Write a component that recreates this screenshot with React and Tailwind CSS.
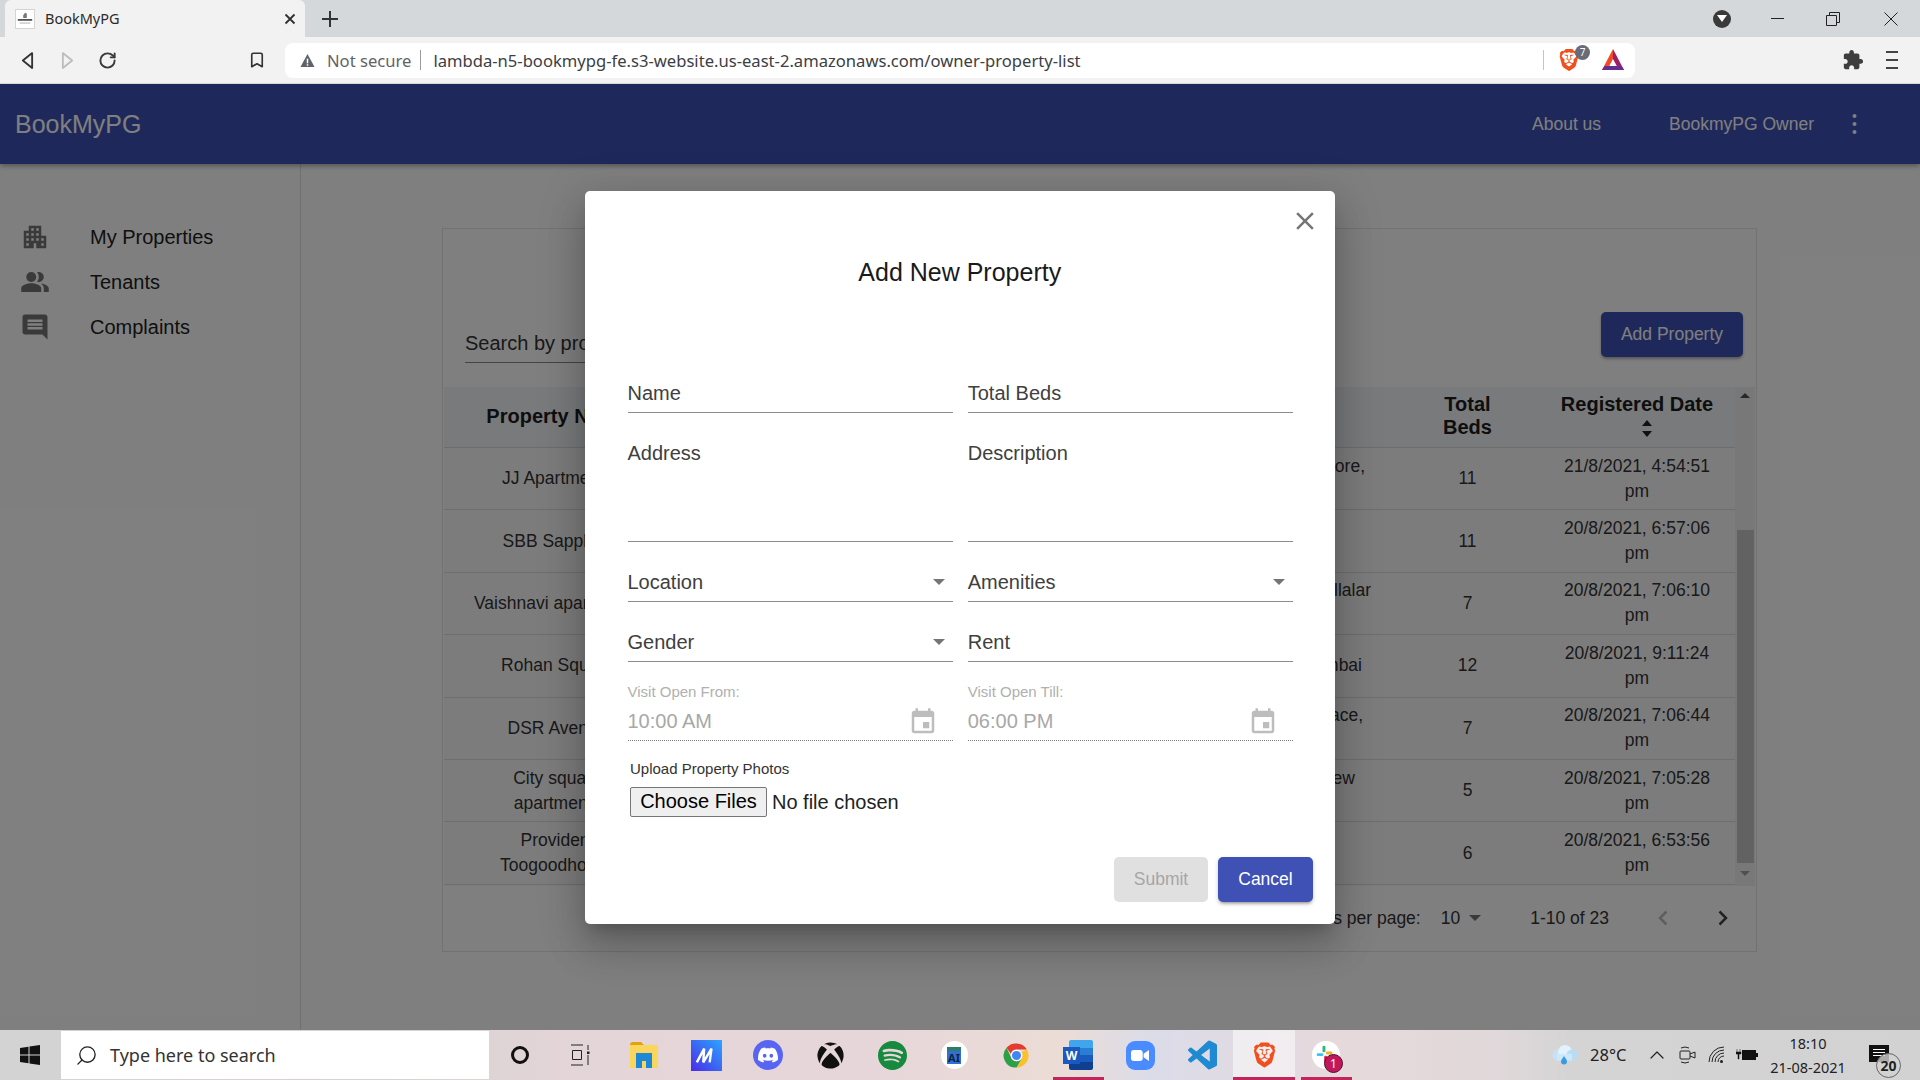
import React from "react";
import { RotateCw, Bookmark, Search, ChevronUp } from "lucide-react";
import { FaXbox } from "react-icons/fa";
import { SiDiscord, SiSpotify, SiBrave } from "react-icons/si";

const rows = [
  { name: ["JJ Apartments"], addr: "Bangalore,", pr: "pr-[34px]", two: true, beds: 11, date: "21/8/2021, 4:54:51" },
  { name: ["SBB Sapphire"], addr: "", pr: "", two: false, beds: 11, date: "20/8/2021, 6:57:06" },
  { name: ["Vaishnavi apartments"], addr: "Vallalar", pr: "pr-[28px]", two: true, beds: 7, date: "20/8/2021, 7:06:10" },
  { name: ["Rohan Square"], addr: "Mumbai", pr: "pr-[37px]", two: false, beds: 12, date: "20/8/2021, 9:11:24" },
  { name: ["DSR Avenue"], addr: "Palace,", pr: "pr-[36px]", two: true, beds: 7, date: "20/8/2021, 7:06:44" },
  { name: ["City square", "apartments"], addr: "View", pr: "pr-[44px]", two: true, beds: 5, date: "20/8/2021, 7:05:28" },
  { name: ["Provident", "Toogoodhouse"], addr: "", pr: "", two: false, beds: 6, date: "20/8/2021, 6:53:56" },
];

const Mui = ({ d, className }) => (
  <svg viewBox="0 0 24 24" className={className} fill="currentColor"><path d={d} /></svg>
);
const EVENT = "M17 12h-5v5h5v-5zM16 1v2H8V1H6v2H5c-1.11 0-1.99.9-1.99 2L3 19c0 1.1.89 2 2 2h14c1.1 0 2-.9 2-2V5c0-1.1-.9-2-2-2h-1V1h-2zm3 18H5V8h14v11z";

function Field({ label, caret, tall }) {
  return (
    <div className={`relative border-b border-[#8c8c8c] pt-[10px] ${tall ? "h-[110px]" : "h-[41px]"}`}>
      <div className="text-[20px] leading-[23px] text-[#404040]">{label}</div>
      {caret && <div className="absolute right-[8px] top-[18px] w-0 h-0 border-l-[6px] border-r-[6px] border-t-[6px] border-l-transparent border-r-transparent border-t-[#757575]" />}
    </div>
  );
}

function TimeField({ label, value }) {
  return (
    <div className="h-[60px] border-b border-dotted border-[#7c7c7c] flex flex-col">
      <div className="text-[15px] leading-[15px] text-[#b0b0b0] mt-[3px]">{label}</div>
      <div className="flex items-center justify-between pr-[15px] mt-[7px]">
        <span className="text-[20px] leading-[28px] text-[#a8a8a8] -mt-[1px]">{value}</span>
        <Mui d={EVENT} className="w-[30px] h-[30px] text-[#bdbdbd] translate-y-[1px]" />
      </div>
    </div>
  );
}

function Chrome() {
  return (
    <div className="shrink-0 font-['Noto_Sans',sans-serif]">
      <div className="h-[37px] bg-[#d5d8db] flex items-end pl-[5px] relative">
        <div className="w-[300px] h-[37px] bg-[#f2f2f2] rounded-t-[6px] flex items-center pl-[10px]">
          <div className="w-[20px] h-[20px] bg-white border border-[#d4d4d4] flex items-center justify-center">
            <svg viewBox="0 0 20 20" className="w-[18px] h-[18px]">
              <path d="M10 3l2 1v5H8V6z" fill="#777" /><rect x="2" y="10" width="16" height="2" fill="#555" /><rect x="4" y="14" width="12" height="1" fill="#aaa" />
            </svg>
          </div>
          <span className="ml-[10px] text-[14.5px] text-[#2b2b2b] flex-1">BookMyPG</span>
          <svg viewBox="0 0 12 12" className="w-[12px] h-[12px] mr-[9px]"><path d="M1.5 1.5l9 9M10.5 1.5l-9 9" stroke="#303030" strokeWidth="1.8" /></svg>
        </div>
        <svg viewBox="0 0 16 16" className="w-[16px] h-[16px] ml-[17px] mb-[10px]"><path d="M8 0v16M0 8h16" stroke="#333" strokeWidth="2" /></svg>
        <div className="flex-1" />
        <div className="flex items-center h-[37px]">
          <div className="w-[18px] h-[18px] rounded-full bg-[#3a3a3a] flex items-center justify-center mr-[40px]">
            <div className="w-0 h-0 border-l-[5px] border-r-[5px] border-t-[7px] border-l-transparent border-r-transparent border-t-white" />
          </div>
          <div className="w-[13px] h-px bg-[#222] mr-[42px]" />
          <svg viewBox="0 0 14 14" className="w-[14px] h-[14px] mr-[44px]"><path d="M.5 3.5h10v10H.5zM3.5 3.5v-3h10v10h-3" fill="none" stroke="#222" /></svg>
          <svg viewBox="0 0 14 14" className="w-[14px] h-[14px] mr-[22px]"><path d="M.5.5l13 13M13.5.5l-13 13" stroke="#222" /></svg>
        </div>
      </div>
      <div className="h-[47px] bg-[#f2f2f2] border-b border-[#d8d8d8] flex items-center">
        <div className="w-[285px] flex items-center relative h-full pl-[21px]">
          <svg viewBox="0 0 14 20" className="w-[13px] h-[19px]"><path d="M12 2L2 10l10 8z" fill="none" stroke="#333" strokeWidth="2" strokeLinejoin="round" /></svg>
          <svg viewBox="0 0 14 20" className="w-[13px] h-[19px] ml-[27px]"><path d="M2 2l10 8-10 8z" fill="none" stroke="#bdbdbd" strokeWidth="2" strokeLinejoin="round" /></svg>
          <RotateCw className="w-[19px] h-[19px] ml-[24px] text-[#3a3a3a]" strokeWidth={2.4} />
          <Bookmark className="w-[18px] h-[20px] ml-[131px] text-[#333]" strokeWidth={2.2} />
        </div>
        <div className="w-[1350px] h-[35px] bg-white rounded-[8px] flex items-center pl-[15px] relative">
          <svg viewBox="0 0 16 16" className="w-[15px] h-[15px]"><path d="M8 1l7.5 14H.5z" fill="#5f6368" /><rect x="7.2" y="6" width="1.6" height="5" fill="#fff" /><rect x="7.2" y="12" width="1.6" height="1.6" fill="#fff" /></svg>
          <span className="ml-[12px] text-[16.6px] text-[#5f6368] leading-none pt-[2px]">Not secure</span>
          <span className="ml-[9px] w-px h-[20px] bg-[#9a9a9a]" />
          <span className="ml-[12px] text-[16.6px] text-[#3c4043] leading-none pt-[2px]">lambda-n5-bookmypg-fe.s3-website.us-east-2.amazonaws.com/owner-property-list</span>
          <div className="flex-1" />
          <span className="w-px h-[20px] bg-[#c4c4c4]" />
          <div className="relative ml-[14px] w-[26px] h-[28px] flex items-center">
            <SiBrave className="w-[22px] h-[26px] text-[#f1501e]" />
            <div className="absolute -top-px left-[17px] w-[15px] h-[15px] rounded-full bg-[#686b78] text-white text-[10px] leading-[15px] text-center">7</div>
          </div>
          <svg viewBox="0 0 24 24" className="w-[24px] h-[24px] ml-[17px] mr-[10px]">
            <path d="M12 1L1 22h5L12 11z" fill="#f04a26" /><path d="M12 1l11 21h-5L12 11z" fill="#9e1f63" /><path d="M1 22h22l-2.500-4H3.500z" fill="#662d91" />
          </svg>
        </div>
        <Mui className="w-[22px] h-[22px] text-[#3e3e3e] ml-[207px]" d="M20.500 11H19V7c0-1.100-.9-2-2-2h-4V3.500C13 2.120 11.880 1 10.500 1S8 2.120 8 3.500V5H4c-1.100 0-1.990.9-1.990 2v3.800H3.500c1.490 0 2.700 1.210 2.700 2.700s-1.210 2.700-2.700 2.700H2V20c0 1.100.9 2 2 2h3.800v-1.500c0-1.490 1.210-2.700 2.700-2.700 1.490 0 2.700 1.210 2.700 2.700V22H17c1.100 0 2-.9 2-2v-4h1.500c1.380 0 2.500-1.120 2.500-2.500S21.880 11 20.500 11z" />
        <div className="ml-[22px] w-[12px] flex flex-col gap-[6px]">
          <div className="h-[2px] bg-[#444]" /><div className="h-[2px] bg-[#444]" /><div className="h-[2px] bg-[#444]" />
        </div>
      </div>
    </div>
  );
}

function Site() {
  return (
    <div className="relative flex-1 min-h-0 flex flex-col bg-white font-['Liberation_Sans',Arial,sans-serif] overflow-hidden">
      <header className="h-[80px] shrink-0 bg-[#3f51b5] text-white flex items-center pl-[15px] shadow-[0_2px_5px_rgba(0,0,0,0.35)] relative">
        <span className="text-[25px] pt-[1px]">BookMyPG</span>
        <div className="flex-1" />
        <span className="text-[17.5px] font-medium">About us</span>
        <span className="text-[17.5px] font-medium ml-[68px]">BookmyPG Owner</span>
        <svg viewBox="0 0 4 20" className="w-[5px] h-[20px] ml-[38px] mr-[63px]" fill="currentColor"><circle cx="2" cy="2" r="2" /><circle cx="2" cy="10" r="2" /><circle cx="2" cy="18" r="2" /></svg>
      </header>
      <div className="flex-1 flex min-h-0">
        <aside className="w-[301px] shrink-0 border-r border-[#e0e0e0] pt-[50px] pl-[20px]">
          {[
            ["My Properties", <Mui key="a" className="w-[30px] h-[30px]" d="M17 11V3H7v4H3v14h8v-4h2v4h8V11h-4zM7 19H5v-2h2v2zm0-4H5v-2h2v2zm0-4H5V9h2v2zm4 4H9v-2h2v2zm0-4H9V9h2v2zm0-4H9V5h2v2zm4 8h-2v-2h2v2zm0-4h-2V9h2v2zm0-4h-2V5h2v2zm4 12h-2v-2h2v2zm0-4h-2v-2h2v2z" />],
            ["Tenants", <svg key="b" viewBox="0 0 24 24" className="w-[30px] h-[30px]" fill="currentColor"><path fillRule="evenodd" d="M16.67 13.13C18.04 14.06 19 15.32 19 17v3h4v-3c0-2.18-3.57-3.47-6.33-3.87z" /><circle cx="9" cy="8" r="4" /><path fillRule="evenodd" d="M15 12c2.21 0 4-1.79 4-4s-1.79-4-4-4c-.47 0-.91.1-1.33.24C14.5 5.27 15 6.58 15 8s-.5 2.73-1.33 3.76c.42.14.86.24 1.33.24zM9 13c-2.67 0-8 1.34-8 4v3h16v-3c0-2.66-5.33-4-8-4z" /></svg>],
            ["Complaints", <Mui key="c" className="w-[30px] h-[30px]" d="M21.99 4c0-1.1-.89-2-1.99-2H4c-1.1 0-2 .9-2 2v12c0 1.1.9 2 2 2h14l4 4-.01-18zM18 14H6v-2h12v2zm0-3H6V9h12v2zm0-3H6V6h12v2z" />],
          ].map(([t, icon]) => (
            <div key={t} className="h-[45px] flex items-center">
              <span className="text-[#757575] w-[70px] shrink-0">{icon}</span>
              <span className="text-[20px] text-[#212121]">{t}</span>
            </div>
          ))}
        </aside>
        <main className="flex-1 min-w-0 pt-[64px] pl-[141px]">
          <div className="w-[1315px] h-[724px] border border-[#e4e4e4] flex flex-col">
            <div className="h-[158px] shrink-0 flex items-end pl-[22px] pr-[13px] pb-[30px] justify-between">
              <div className="w-[300px] border-b border-[#888] text-[20px] leading-[23px] text-[#333] pb-[7px] mb-[-6px]">Search by property</div>
              <div className="w-[142px] h-[45px] bg-[#3f51b5] rounded-[5px] text-white text-[17.5px] font-medium flex items-center justify-center shadow-[0_2px_3px_rgba(0,0,0,0.3)]">Add Property</div>
            </div>
            <div className="flex h-[499px] shrink-0 ml-[1px] mr-[1px]">
              <div className="flex-1 min-w-0 flex flex-col">
                <div className="h-[61px] shrink-0 bg-[#f2f4f8] border-b border-[#dadada] grid grid-cols-[227px_728px_137px_202px] items-center text-center text-[20px] leading-[23px] font-bold text-[#1c1c1c] pb-[2px]">
                  <div>Property Name</div>
                  <div>Address</div>
                  <div>Total<br />Beds</div>
                  <div className="flex flex-col items-center mb-[2px]">
                    <span className="whitespace-nowrap">Registered Date</span>
                    <svg viewBox="0 0 12 17" className="w-[12px] h-[17px] ml-[20px] mt-[4px]"><path d="M6 0l5 6H1zM6 17l-5-6h10z" fill="#222" /></svg>
                  </div>
                </div>
                {rows.map((r) => (
                  <div key={r.date} className="h-[62.4px] shrink-0 bg-[#f9f9f9] border-b border-[#dcdcdc] last:border-b-0 grid grid-cols-[227px_728px_137px_202px] items-center text-center text-[17.5px] leading-[25px] text-[#333]">
                    <div>{r.name.map((n) => <div key={n}>{n}</div>)}</div>
                    <div className={`text-right ${r.pr} ${r.two ? "pb-[25px]" : ""}`}>{r.addr}</div>
                    <div>{r.beds}</div>
                    <div><div>{r.date}</div><div>pm</div></div>
                  </div>
                ))}
                <div className="flex-1 bg-[#f9f9f9]" />
              </div>
              <div className="w-[20px] shrink-0 bg-[#f1f1f1] flex flex-col items-center pt-[6px]">
                <div className="w-0 h-0 border-l-[5px] border-r-[5px] border-b-[5px] border-l-transparent border-r-transparent border-b-[#505050]" />
                <div className="w-[17px] h-[333px] bg-[#c4c4c4] mt-[132px]" />
                <div className="w-0 h-0 border-l-[5px] border-r-[5px] border-t-[5px] border-l-transparent border-r-transparent border-t-[#a0a0a0] mt-[8px]" />
              </div>
            </div>
            <div className="flex-1 flex items-center justify-end text-[17.5px] text-[#333] pr-[28px] pb-[1px]">
              <span>Rows per page:</span>
              <span className="ml-[20px]">10</span>
              <div className="ml-[9px] w-0 h-0 border-l-[6px] border-r-[6px] border-t-[6px] border-l-transparent border-r-transparent border-t-[#757575]" />
              <span className="ml-[49px]">1-10 of 23</span>
              <svg viewBox="0 0 10 16" className="w-[10px] h-[16px] ml-[49px]"><path d="M8.500 1.500L2 8l6.500 6.500" fill="none" stroke="#bdbdbd" strokeWidth="2.500" /></svg>
              <svg viewBox="0 0 10 16" className="w-[10px] h-[16px] ml-[50px]"><path d="M1.500 1.500L8 8l-6.500 6.500" fill="none" stroke="#444" strokeWidth="2.500" /></svg>
            </div>
          </div>
        </main>
      </div>

      <div className="absolute inset-0 bg-black/50" />

      <div className="absolute left-[585px] top-[107px] w-[750px] h-[733px] bg-white rounded-[5px] flex flex-col pl-[42.5px] pr-[42px] shadow-[0_11px_15px_-7px_rgba(0,0,0,0.2),0_24px_38px_3px_rgba(0,0,0,0.14),0_9px_46px_8px_rgba(0,0,0,0.12)]">
        <svg viewBox="0 0 24 24" className="absolute right-[15px] top-[15px] w-[30px] h-[30px] text-[#757575]" fill="currentColor"><path d="M19 6.410L17.590 5 12 10.590 6.410 5 5 6.410 10.590 12 5 17.590 6.410 19 12 13.410 17.590 19 19 17.590 13.410 12z" /></svg>
        <h2 className="text-center text-[25px] leading-[30px] text-[#1a1a1a] mt-[66px] mr-[1px]">Add New Property</h2>
        <div className="grid grid-cols-2 gap-x-[15px] gap-y-[19px] mt-[85px]">
          <Field label="Name" />
          <Field label="Total Beds" />
          <Field label="Address" tall />
          <Field label="Description" tall />
          <Field label="Location" caret />
          <Field label="Amenities" caret />
          <Field label="Gender" caret />
          <Field label="Rent" />
          <TimeField label="Visit Open From:" value="10:00 AM" />
          <TimeField label="Visit Open Till:" value="06:00 PM" />
        </div>
        <div className="ml-[2.5px] mt-[19px] text-[15px] leading-[18px] text-[#333]">Upload Property Photos</div>
        <div className="ml-[2.5px] mt-[9px] flex items-center">
          <div className="w-[137px] h-[30px] bg-[#efefef] border border-[#767676] rounded-[2px] text-[20px] leading-[26px] text-center text-black">Choose Files</div>
          <span className="ml-[5px] text-[20px] text-[#222]">No file chosen</span>
        </div>
        <div className="flex-1" />
        <div className="flex justify-end gap-[10px] -mr-[20px] mb-[22px]">
          <div className="w-[94px] h-[45px] rounded-[5px] bg-[#e0e0e0] text-[#a6a6a6] text-[17.5px] font-medium flex items-center justify-center">Submit</div>
          <div className="w-[95px] h-[45px] rounded-[5px] bg-[#3f51b5] text-white text-[17.5px] font-medium flex items-center justify-center shadow-[0_3px_3px_-2px_rgba(0,0,0,0.3),0_2px_4px_rgba(0,0,0,0.2)]">Cancel</div>
        </div>
      </div>
    </div>
  );
}

const Cell = ({ children, active, under, inset }) => (
  <div className={`relative w-[62px] h-[50px] shrink-0 flex items-center justify-center ${active ? "bg-white/50" : ""}`}>
    {children}
    {under && <div className={`absolute bottom-0 h-[3px] bg-[#c2255c] ${inset ? "left-[6px] right-[5px]" : "left-0 right-0"}`} />}
  </div>
);

function Taskbar() {
  return (
    <div className="h-[50px] shrink-0 flex items-center font-['Noto_Sans',sans-serif] bg-[linear-gradient(90deg,#d3d3d3_0%,#d6d2d3_20%,#e4d5d8_30%,#e6d6da_45%,#ecdcd6_55%,#dbdce9_60%,#e6d9db_70%,#e0d8da_78%,#d4d4d4_82%,#d2d2d2_100%)]">
      <div className="w-[61px] h-[50px] flex items-center justify-center shrink-0 pr-[1px]">
        <svg viewBox="0 0 20 20" className="w-[20px] h-[20px]" fill="#111"><path d="M0 3l8.500-1.200V9.500H0zM9.500 1.600L20 0v9.500H9.500zM0 10.500h8.500v7.700L0 17zM9.500 10.500H20V20L9.500 18.400z" /></svg>
      </div>
      <div className="w-[428px] h-[48px] bg-white shrink-0 flex items-center pl-[14px]">
        <Search className="w-[23px] h-[23px] text-[#222] -scale-x-100" strokeWidth={1.4} />
        <span className="ml-[12px] text-[18px] text-[#333]">Type here to search</span>
      </div>
      <Cell><div className="w-[18px] h-[18px] rounded-full border-[3px] border-[#111]" /></Cell>
      <Cell>
        <svg viewBox="0 0 20 22" className="w-[20px] h-[22px] -ml-[4px]" fill="none" stroke="#222"><path d="M1 1h12M1 21h12M2.500 6.500h9v9h-9z" /><path d="M18 1v5M18 11v10" /><rect x="17" y="7.500" width="2.500" height="2.500" fill="#222" stroke="none" /></svg>
      </Cell>
      <Cell>
        <svg viewBox="0 0 28 26" className="w-[28px] h-[26px]"><path d="M0 3q0-3 3-3h8l3 3h-14z" fill="#e0a30c" /><path d="M0 3h28v23H0z" fill="#fbd65c" /><path d="M6 26V13h16v13h-6v-7h-4v7z" fill="#1e88d8" /><rect x="6" y="11" width="16" height="3" fill="#1e88d8" /></svg>
      </Cell>
      <Cell>
        <div className="w-[31px] h-[31px] bg-[linear-gradient(45deg,#4a2be8,#2aa6ff)] flex items-center justify-center">
          <svg viewBox="0 0 24 24" className="w-[22px] h-[22px]" fill="none" stroke="#fff" strokeWidth="2.600"><path d="M2 20L10 5l-1 15 9-15-2 15" /></svg>
        </div>
      </Cell>
      <Cell>
        <div className="w-[30px] h-[30px] rounded-full bg-[#5865f2] flex items-center justify-center"><SiDiscord className="w-[20px] h-[20px] text-white" /></div>
      </Cell>
      <Cell><FaXbox className="w-[27px] h-[27px] text-[#111]" /></Cell>
      <Cell><SiSpotify className="w-[29px] h-[29px] text-[#168a3e]" /></Cell>
      <Cell>
        <div className="w-[27px] h-[28px] rounded-full bg-white flex flex-col items-center justify-center">
          <div className="w-[14px] h-[4px] bg-[#2e7d6b]" />
          <div className="w-[14px] h-[13px] bg-[#2f6fd6] text-[11px] leading-[13px] font-bold text-[#10233f] text-center">AI</div>
        </div>
      </Cell>
      <Cell>
        <svg viewBox="0 0 48 48" className="w-[29px] h-[29px]">
          <path d="M24 4a20 20 0 0117.320 10H24a10 10 0 00-9.500 7L7.500 11A20 20 0 0124 4z" fill="#e33b2e" />
          <path d="M41.320 14A20 20 0 0124 44l8.660-15A10 10 0 0032 18z" fill="#fbc02d" />
          <path d="M7.500 11A20 20 0 0024 44l8.660-15a10 10 0 01-17.700-2z" fill="#2e9e48" />
          <circle cx="24" cy="24" r="9.500" fill="#fff" /><circle cx="24" cy="24" r="7.500" fill="#4285f4" />
        </svg>
      </Cell>
      <Cell under inset>
        <div className="relative w-[30px] h-[30px]">
          <div className="absolute left-[6px] top-0 w-[24px] h-[30px] rounded-[2px] bg-[linear-gradient(180deg,#41a5ee_0%,#41a5ee_25%,#2b7cd3_25%,#2b7cd3_50%,#185abd_50%,#185abd_75%,#103f91_75%)]" />
          <div className="absolute left-0 top-[7px] w-[17px] h-[17px] bg-[#185abd] text-white text-[12px] leading-[17px] font-bold text-center">W</div>
        </div>
      </Cell>
      <Cell>
        <div className="w-[29px] h-[29px] rounded-[9px] bg-[#4a8cff] flex items-center justify-center">
          <svg viewBox="0 0 20 14" className="w-[18px] h-[13px]" fill="#fff"><rect x="0" y="1" width="13" height="12" rx="3" /><path d="M14 5l6-4v12l-6-4z" /></svg>
        </div>
      </Cell>
      <Cell>
        <svg viewBox="0 0 24 24" className="w-[29px] h-[30px]" fill="#1f8ad2"><path d="M23.15 2.587L18.21.21a1.494 1.494 0 0 0-1.705.29l-9.46 8.63-4.12-3.128a.999.999 0 0 0-1.276.057L.327 7.261A1 1 0 0 0 .326 8.74L3.899 12 .326 15.26a1 1 0 0 0 .001 1.479L1.65 17.94a.999.999 0 0 0 1.276.057l4.12-3.128 9.46 8.63a1.492 1.492 0 0 0 1.704.29l4.942-2.377A1.5 1.5 0 0 0 24 20.06V3.939a1.5 1.5 0 0 0-.85-1.352zm-5.146 14.861L10.826 12l7.178-5.448v10.896z" /></svg>
      </Cell>
      <Cell active under><SiBrave className="w-[25px] h-[30px] text-[#f1501e]" /></Cell>
      <Cell under inset>
        <div className="relative w-[28px] h-[28px] rounded-full bg-white">
          <svg viewBox="0 0 24 24" className="absolute inset-[3px] w-[20px] h-[20px]">
            <rect x="9" y="2" width="3.500" height="8" rx="1.700" fill="#2eb67d" /><rect x="2" y="11" width="8" height="3.500" rx="1.700" fill="#36c5f0" /><rect x="13" y="9" width="8" height="3.500" rx="1.700" fill="#ecb22e" /><rect x="11" y="14" width="3.500" height="8" rx="1.700" fill="#e01e5a" />
          </svg>
          <div className="absolute left-[12px] top-[13px] w-[19px] h-[19px] rounded-full bg-[#c2185b] border border-[#5a0a2a] text-white text-[12px] leading-[17px] text-center">1</div>
        </div>
      </Cell>
      <div className="flex-1" />
      <svg viewBox="0 0 30 24" className="w-[30px] h-[24px] shrink-0">
        <circle cx="9" cy="12" r="5.500" fill="#c4e2f8" /><circle cx="16" cy="9" r="7" fill="#e2f1fb" /><circle cx="23" cy="12" r="5.500" fill="#b7dcf6" /><rect x="8" y="11" width="15" height="6.500" fill="#cfe8f9" />
        <path d="M15 13c2 3 3 4 3 5.500a3 3 0 01-6 0c0-1.500 1-2.500 3-5.500z" fill="#3a9be0" />
      </svg>
      <span className="w-[37px] ml-[11px] text-[16.5px] text-[#222] shrink-0 whitespace-nowrap">28°C</span>
      <ChevronUp className="w-[24px] h-[24px] ml-[18px] -mr-[2px] text-[#222] shrink-0" strokeWidth={1.2} />
      <svg viewBox="0 0 20 20" className="w-[20px] h-[20px] ml-[11px] shrink-0" fill="none" stroke="#222"><rect x="2" y="6" width="10" height="8" rx="1" /><path d="M12 9l5-2v6l-5-2M3 3q4-2 8 0M3 17q4 2 8 0" /></svg>
      <svg viewBox="0 0 20 20" className="w-[20px] h-[20px] ml-[9px] shrink-0" fill="none" stroke="#222"><path d="M2 17a15 15 0 0115-15M5 17a12 12 0 0112-12M8 17a9 9 0 019-9M11 17a6 6 0 016-6" /><circle cx="14.500" cy="16.500" r="1.500" fill="#222" stroke="none" /></svg>
      <svg viewBox="0 0 22 14" className="w-[22px] h-[14px] ml-[9px] shrink-0"><rect x="6" y="2" width="14" height="10" fill="#111" /><rect x="20" y="5" width="2" height="4" fill="#111" /><path d="M1 1v3M4 1v3M0 4h5v2H3v5H2V6H0z" fill="#111" stroke="#111" strokeWidth=".5" /></svg>
      <div className="w-[90px] ml-[5px] text-center text-[14.5px] leading-[24px] text-[#222] shrink-0">
        <div>18:10</div><div className="whitespace-nowrap">21-08-2021</div>
      </div>
      <div className="relative w-[32px] h-[32px] ml-[16px] shrink-0 mr-[19px]">
        <div className="absolute left-0 top-[6px] w-[20px] h-[17px] bg-[#111] flex flex-col gap-[2px] px-[4px] pt-[4px]">
          <div className="h-px bg-white" /><div className="h-px bg-white" /><div className="h-px bg-white" />
        </div>
        <div className="absolute left-[7px] top-[14px] w-[25px] h-[25px] rounded-full border border-[#666] bg-[#d2d2d2]/80 text-[14px] leading-[23px] font-bold text-[#222] text-center">20</div>
      </div>
    </div>
  );
}

export default function App() {
  return (
    <div className="w-[1920px] h-[1080px] flex flex-col overflow-hidden">
      <Chrome />
      <Site />
      <Taskbar />
    </div>
  );
}
